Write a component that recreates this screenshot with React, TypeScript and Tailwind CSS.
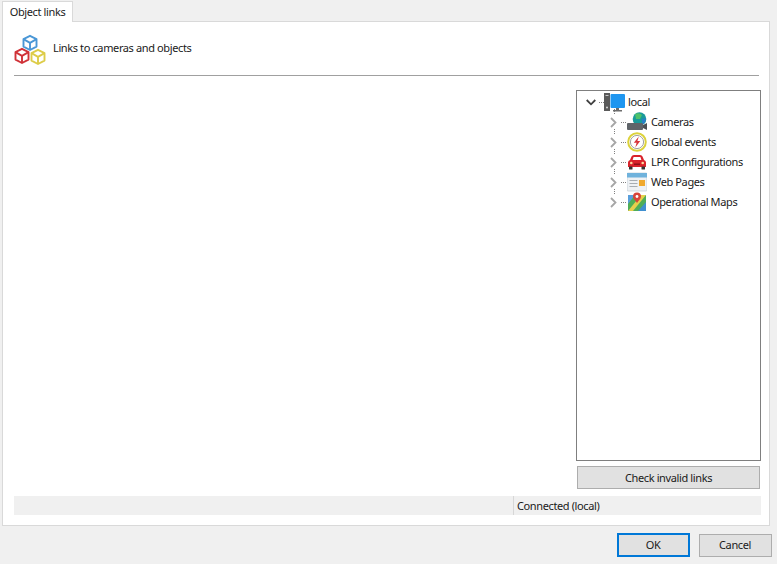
import React from 'react';

const Cube = ({ x, y, color }: { x: number; y: number; color: string }) => (
  <g transform={`translate(${x} ${y})`} fill="none" stroke={color} strokeWidth="1.9" strokeLinejoin="round">
    <path d="M7.5 0.8 L14 4.2 V11.6 L7.5 15 L1 11.6 V4.2 Z" fill="#fff" />
    <path d="M1 4.2 L7.5 7.8 L14 4.2 M7.5 7.8 V15" />
  </g>
);

const LinksIcon = () => (
  <svg width="32" height="32" viewBox="0 0 32 32" className="shrink-0">
    <Cube x={8.5} y={1} color="#4a97d6" />
    <Cube x={0.5} y={14} color="#d03238" />
    <Cube x={16.5} y={15} color="#ddcc48" />
  </svg>
);

const ServerIcon = () => (
  <svg width="21" height="20" viewBox="0 0 21 20" className="shrink-0">
    <rect x="0" y="1" width="6" height="18" fill="#5a5a5a" />
    <rect x="1.5" y="3" width="3" height="1" fill="#c8c8c8" />
    <circle cx="3" cy="15.5" r="1" fill="#d8d8d8" />
    <rect x="6.5" y="2" width="14.5" height="14" rx="1" fill="#1e96f0" />
    <rect x="12" y="16" width="3" height="2" fill="#6d6d6d" />
    <rect x="9" y="18" width="9" height="1.5" fill="#6d6d6d" />
  </svg>
);

const CameraIcon = () => (
  <svg width="20" height="20" viewBox="0 0 20 20">
    <circle cx="12.5" cy="7" r="6.8" fill="#1a9a9a" />
    <path d="M8 2 Q12 0 15 3 L13 7 L9 7 Z" fill="#4fc26a" />
    <path d="M15 7 L19 6 Q19 11 15 13 Z" fill="#2a7fc8" />
    <rect x="0" y="11" width="16" height="7" rx="1" fill="#5f6469" />
    <path d="M16 13 L20 11 V18 L16 16 Z" fill="#4c5054" />
  </svg>
);

const EventIcon = () => (
  <svg width="20" height="20" viewBox="0 0 20 20">
    <circle cx="10" cy="10" r="8.8" fill="#fff" stroke="#dcd23c" strokeWidth="2" />
    <circle cx="10" cy="10" r="6.6" fill="#fff" stroke="#7a7a7a" strokeWidth="0.7" />
    <path d="M11.8 4.5 L6.8 10.8 H9.6 L8.3 15.5 L13.2 9 H10.4 Z" fill="#d8343a" />
  </svg>
);

const CarIcon = () => (
  <svg width="20" height="20" viewBox="0 0 20 20">
    <path d="M4.5 4.5 Q5 3 7 3 H13 Q15 3 15.5 4.5 L17 8 Q19 8.5 19 10.5 V15 H1 V10.5 Q1 8.5 3 8 Z" fill="#d9232b" />
    <path d="M5.6 8 L6.6 5 H13.4 L14.4 8 Z" fill="#fff" />
    <rect x="2" y="14.5" width="3.5" height="3" rx="0.5" fill="#333" />
    <rect x="14.5" y="14.5" width="3.5" height="3" rx="0.5" fill="#333" />
    <circle cx="4.3" cy="11" r="1.3" fill="#ffd9a0" />
    <circle cx="15.7" cy="11" r="1.3" fill="#ffd9a0" />
    <rect x="7" y="11.5" width="6" height="1.5" fill="#8e1218" />
  </svg>
);

const WebIcon = () => (
  <svg width="20" height="20" viewBox="0 0 20 20">
    <rect x="0" y="1" width="20" height="18" rx="1" fill="#eef1f4" stroke="#b7c2cc" strokeWidth="0.6" />
    <rect x="0" y="1" width="20" height="4.5" fill="#6fb2dc" />
    <rect x="2.5" y="8" width="8" height="1" fill="#a7adb3" />
    <rect x="2.5" y="11" width="8" height="1" fill="#a7adb3" />
    <rect x="2.5" y="14" width="8" height="1" fill="#a7adb3" />
    <rect x="12" y="8" width="6" height="6" fill="#f0a92e" />
  </svg>
);

const MapIcon = () => (
  <svg width="20" height="20" viewBox="0 0 20 20">
    <path d="M1 3 H19 V19 H1 Z" fill="#4fae57" />
    <path d="M1 3 H8 L1 12 Z" fill="#5a9fdc" />
    <path d="M1 19 L14 3 H19 L6 19 Z" fill="#e6cf4c" />
    <path d="M11 19 L19 10 V19 Z" fill="#3f8fd0" />
    <path d="M10 0.5 A4 4 0 0 1 14 4.5 C14 7 11.5 8.5 10 11 C8.5 8.5 6 7 6 4.5 A4 4 0 0 1 10 0.5 Z" fill="#d8443a" />
    <circle cx="10" cy="4.5" r="1.4" fill="#fff" />
  </svg>
);

const Chevron = ({ open }: { open?: boolean }) => (
  <svg width="10" height="11" viewBox="0 0 10 11" className="shrink-0">
    <path
      d={open ? 'M0.7 3 L5 7.3 L9.3 3' : 'M3 1 L7.5 5.5 L3 10'}
      fill="none"
      stroke={open ? '#404040' : '#a6a6a6'}
      strokeWidth="1.8"
    />
  </svg>
);

const items = [
  { label: 'Cameras', icon: <CameraIcon /> },
  { label: 'Global events', icon: <EventIcon /> },
  { label: 'LPR Configurations', icon: <CarIcon /> },
  { label: 'Web Pages', icon: <WebIcon /> },
  { label: 'Operational Maps', icon: <MapIcon /> },
];

const App: React.FC = () => {
  return (
    <div className="w-[777px] h-[564px] bg-[#f0f0f0] overflow-hidden text-[11px] tracking-[-0.38px] leading-[16px] text-[#1a1a1a] font-['Noto_Sans','Open_Sans',sans-serif]">
      {/* Tab strip */}
      <div className="h-[21px] pt-px pl-[2px]">
        <div className="relative z-10 w-[71px] h-[21px] bg-white border border-b-0 border-[#d9d9d9] flex items-center justify-center">
          Object links
        </div>
      </div>

      {/* Tab page */}
      <div className="ml-[2px] w-[768px] h-[505px] bg-white border border-[#d9d9d9] pl-[11px] pr-[8px] flex flex-col">
        <div className="h-[54px] pt-[12px] flex gap-[7px] border-b border-[#a0a0a0] w-[745px]">
          <LinksIcon />
          <span className="mt-[6px]">Links to cameras and objects</span>
        </div>

        <div className="flex justify-end mt-[14px]">
          <div className="w-[185px] flex flex-col">
            <div className="h-[371px] border border-[#7f7f7f] pt-[1px] pl-[9px]">
              <div className="h-[20px] flex items-center">
                <Chevron open />
                <span className="w-[5px] ml-[3px] border-t border-dotted border-[#808080]" />
                <ServerIcon />
                <span className="ml-[3px]">local</span>
              </div>
              {items.map((item) => (
                <div key={item.label} className="relative h-[20px] flex items-center pl-[22px]">
                  {/* dotted tree line between the rows */}
                  <span className="absolute left-[28px] top-[-3px] h-[5px] border-l border-dotted border-[#808080]" />
                  <Chevron />
                  <span className="w-[5px] ml-[3px] border-t border-dotted border-[#808080]" />
                  <span className="w-[20px] h-[20px] ml-px shrink-0">{item.icon}</span>
                  <span className="ml-[4px] whitespace-nowrap">{item.label}</span>
                </div>
              ))}
            </div>
            <button className="mt-[5px] ml-px w-[183px] h-[23px] bg-[#e1e1e1] border border-[#adadad] flex items-center justify-center">
              Check invalid links
            </button>
          </div>
        </div>

        {/* Status bar */}
        <div className="mt-[7px] h-[19px] w-[747px] bg-[#f0f0f0] flex">
          <div className="w-[500px] border-r border-[#d7d7d7]" />
          <div className="pl-[3px] flex items-center">Connected (local)</div>
        </div>
      </div>

      {/* Dialog buttons */}
      <div className="mt-[7px] pr-[5px] flex justify-end items-center gap-[9px]">
        <button className="w-[73px] h-[24px] bg-[#e1e1e1] border-2 border-[#0078d7] flex items-center justify-center pr-px">
          OK
        </button>
        <button className="w-[73px] h-[23px] bg-[#e1e1e1] border border-[#adadad] flex items-center justify-center pr-px">
          Cancel
        </button>
      </div>
    </div>
  );
};

export default App;
